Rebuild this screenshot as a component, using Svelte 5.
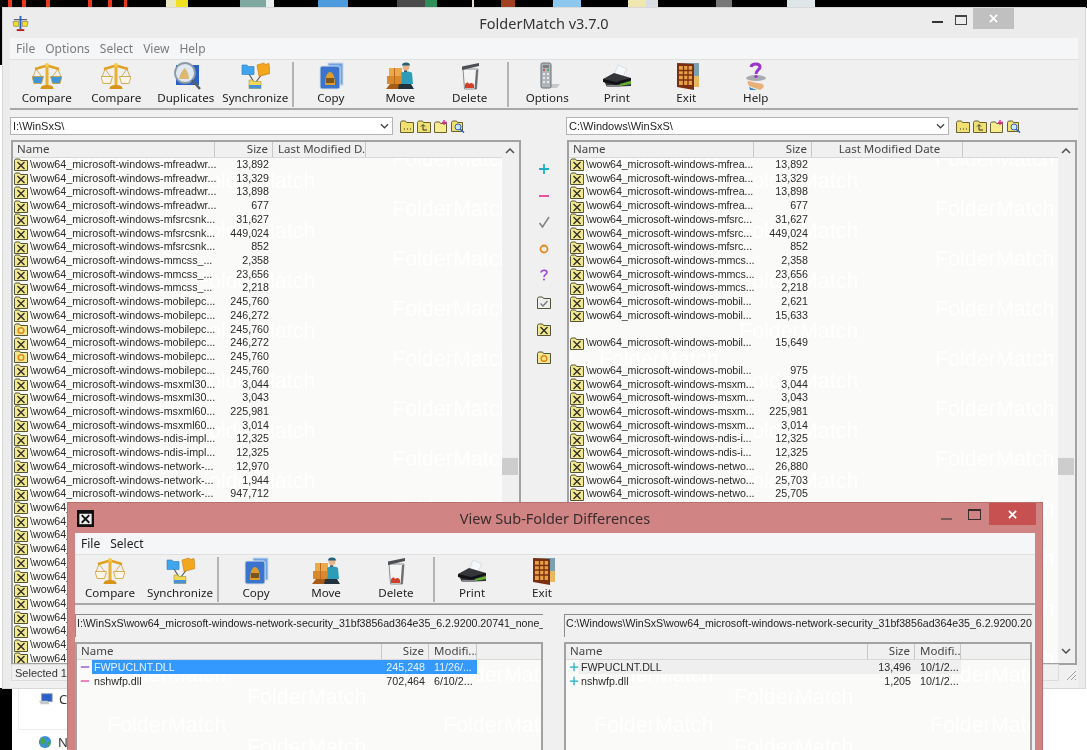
<script lang="ts">
  const leftRows = [
    ['mfreadwr...', '13,892', 'x'], ['mfreadwr...', '13,329', 'x'], ['mfreadwr...', '13,898', 'x'], ['mfreadwr...', '677', 'x'],
    ['mfsrcsnk...', '31,627', 'x'], ['mfsrcsnk...', '449,024', 'x'], ['mfsrcsnk...', '852', 'x'],
    ['mmcss_...', '2,358', 'x'], ['mmcss_...', '23,656', 'x'], ['mmcss_...', '2,218', 'x'],
    ['mobilepc...', '245,760', 'x'], ['mobilepc...', '246,272', 'x'], ['mobilepc...', '245,760', 'o'],
    ['mobilepc...', '246,272', 'x'], ['mobilepc...', '245,760', 'o'], ['mobilepc...', '245,760', 'x'],
    ['msxml30...', '3,044', 'x'], ['msxml30...', '3,043', 'x'], ['msxml60...', '225,981', 'x'], ['msxml60...', '3,014', 'x'],
    ['ndis-impl...', '12,325', 'x'], ['ndis-impl...', '12,325', 'x'],
    ['network-...', '12,970', 'x'], ['network-...', '1,944', 'x'], ['network-...', '947,712', 'x']
  ]
  const rightRows = [
    ['mfrea...', '13,892'], ['mfrea...', '13,329'], ['mfrea...', '13,898'], ['mfrea...', '677'],
    ['mfsrc...', '31,627'], ['mfsrc...', '449,024'], ['mfsrc...', '852'],
    ['mmcs...', '2,358'], ['mmcs...', '23,656'], ['mmcs...', '2,218'],
    ['mobil...', '2,621'], ['mobil...', '15,633'], null, ['mobil...', '15,649'], null, ['mobil...', '975'],
    ['msxm...', '3,044'], ['msxm...', '3,043'], ['msxm...', '225,981'], ['msxm...', '3,014'],
    ['ndis-i...', '12,325'], ['ndis-i...', '12,325'],
    ['netwo...', '26,880'], ['netwo...', '25,703'], ['netwo...', '25,705']
  ]
  const prefix = '\\wow64_microsoft-windows-'
  const hidden = Array.from({ length: 12 }, (_, i) => i)

  const menu = ['File', 'Options', 'Select', 'View', 'Help']
  const tiles = [0, 1, 2, 3, 4, 5, 6, 7, 8, 9, 10]

  // desktop icons peeking out above the main window
  const strip = [
    { x: 8, w: 4, c: '#e8381c' }, { x: 22, w: 4, c: '#e8381c' }, { x: 46, w: 4, c: '#e8381c' },
    { x: 88, w: 4, c: '#e8381c' }, { x: 108, w: 4, c: '#e8381c' }, { x: 124, w: 3, c: '#e8381c' },
    { x: 166, w: 12, c: '#e9e8c0' }, { x: 176, w: 12, c: '#f0e020' }, { x: 240, w: 26, c: '#7fa9a0' },
    { x: 266, w: 8, c: '#e8f0ee' }, { x: 318, w: 30, c: '#4d9bdc' }, { x: 397, w: 32, c: '#4a4a4a' },
    { x: 425, w: 12, c: '#2f8f5a' }, { x: 472, w: 2, c: '#e8e0d0' }, { x: 501, w: 14, c: '#a04020' },
    { x: 553, w: 28, c: '#8cc8ee' }, { x: 628, w: 18, c: '#efe6b0' }, { x: 646, w: 12, c: '#d8dde2' },
    { x: 716, w: 16, c: '#777' }, { x: 787, w: 28, c: '#dfe6ea' }
  ]
</script>

{#snippet folder(kind: string)}
  <svg class="folder" viewBox="0 0 14 13" aria-hidden="true">
    <path d="M.5 2.500 1.500 1h4l1 1.500h7v10H.5z" fill={kind === 'c' ? '#eeeeee' : '#f2e88e'} stroke="#55523a" />
    {#if kind === 'x'}
      <path d="M3.500 4 10.500 11M10.500 4 3.500 11" stroke="#2a2a2a" stroke-width="1.300" />
    {:else if kind === 'o'}
      <circle cx="7" cy="7.500" r="2.800" fill="none" stroke="#e08a20" stroke-width="1.600" />
    {:else if kind === 'c'}
      <path d="M3.500 7.500 6 10l4.500-5" fill="none" stroke="#777" stroke-width="1.300" />
    {/if}
  </svg>
{/snippet}

{#snippet scale(pan: string)}
  <svg class="tool" viewBox="0 0 30 28" aria-hidden="true">
    <path d="M3 7 15 3.500 27 7" fill="none" stroke="#e0a020" stroke-width="2.400" />
    <rect x="13.500" y="2" width="3" height="21" fill="#eab030" />
    <circle cx="15" cy="3" r="2" fill="#f6cc50" />
    <path d="M8.500 27c0-3.500 3.500-4 6.500-4s6.500.5 6.500 4z" fill="#d8941a" />
    <path d="M4 7 1 15M4 7 10 15M26 7 20 15M26 7 29 15" stroke="#d09a30" stroke-width=".8" />
    <path d="M0 14.500h11.500l-2 7h-7.500z" fill={pan} stroke="#d09a30" stroke-width=".8" />
    <path d="M18.500 14.500h11.500l-2 7h-7.500z" fill={pan} stroke="#d09a30" stroke-width=".8" />
  </svg>
{/snippet}

{#snippet dupes()}
  <svg class="tool" viewBox="0 0 30 28" aria-hidden="true">
    <rect x="5" y="3" width="23" height="20" fill="#2a62c4" />
    <circle cx="14" cy="11" r="10" fill="#dfe8f2" stroke="#8a99a8" stroke-width="1.800" />
    <path d="M8 17c1-6 3-8 6-11 2 3 4 6 4 11z" fill="#dcb870" />
    <path d="M21 18 29 27" stroke="#55606a" stroke-width="2.500" />
  </svg>
{/snippet}

{#snippet sync()}
  <svg class="tool" viewBox="0 0 30 28" aria-hidden="true">
    <path d="M9 12 14 20M22 12 16 20" stroke="#5a5a5a" stroke-width="1.200" />
    <path d="M2 3h5l1 1.500h6v8H2z" fill="#3fa6ee" stroke="#2b78b8" stroke-width=".6" />
    <path d="M17 3l7-2 1 1.500 4-1 1 10-11 3z" fill="#f2a71e" stroke="#c07a10" stroke-width=".6" />
    <path d="M9 18h4l1 1.500h7v7H9z" fill="#f0d858" stroke="#a8963a" stroke-width=".6" />
    <path d="M9 23h12v3.500H9z" fill="#4a90d8" />
  </svg>
{/snippet}

{#snippet copy()}
  <svg class="tool" viewBox="0 0 30 28" aria-hidden="true">
    <rect x="12" y="1" width="15" height="22" fill="#6ea4e4" stroke="#ccd8e6" />
    <rect x="4" y="4" width="20" height="23" rx="2" fill="#3a74cc" stroke="#d8e0ea" />
    <path d="M9 23c0-8 2-13 5-13s5 5 5 13z" fill="#dd9c2c" />
    <rect x="10" y="16" width="8" height="5" fill="#7a5520" />
  </svg>
{/snippet}

{#snippet move()}
  <svg class="tool" viewBox="0 0 30 28" aria-hidden="true">
    <rect x="4" y="6" width="13" height="9" fill="#eba94c" />
    <rect x="2" y="14" width="15" height="8" fill="#d9882c" />
    <path d="M9.500 6v16" stroke="#b96a1e" />
    <path d="M1 27l4-5h10v5z" fill="#a85c18" />
    <circle cx="21" cy="5" r="3.400" fill="#e8b48a" />
    <path d="M17 3.500a4 3 0 0 1 8 0z" fill="#26607a" />
    <path d="M19 8.500h3v3h-3z" fill="#3a2a20" />
    <path d="M16 11c2-2 9-2 11 0l1 11h-7l-2 3h-4l2-7z" fill="#2c9cb8" />
    <path d="M14 22h12l3 5H13z" fill="#24323c" />
  </svg>
{/snippet}

{#snippet trash()}
  <svg class="tool" viewBox="0 0 30 28" aria-hidden="true">
    <path d="M8 7h15l-1.500 20h-12z" fill="#f4f4f4" stroke="#8a8d90" />
    <path d="M7 4.500 24 1v3L7 8z" fill="#4c4f53" />
    <path d="M21 8h2l-1.500 19h-2z" fill="#6a6d70" />
    <path d="M10 23c1-3 3-3 4-1 2-2 4-1 5 1v3H10z" fill="#d2402a" />
  </svg>
{/snippet}

{#snippet options()}
  <svg class="tool" viewBox="0 0 30 28" aria-hidden="true">
    <path d="M18 22h10l-3 4H16z" fill="#c8c8c8" />
    <rect x="9" y="1" width="10" height="25" rx="1.500" fill="#b0b5ba" stroke="#6a7076" />
    <rect x="11" y="3" width="6" height="3" fill="#7a7e82" />
    <circle cx="12" cy="8" r="1" fill="#d04040" /><circle cx="16" cy="8" r="1" fill="#40a050" />
    <path d="M11 11h2v2h-2zM15 11h2v2h-2zM11 15h2v2h-2zM15 15h2v2h-2zM11 19h2v2h-2zM15 19h2v2h-2z" fill="#e8eaec" />
  </svg>
{/snippet}

{#snippet printer()}
  <svg class="tool" viewBox="0 0 30 28" aria-hidden="true">
    <path d="M12 13 16 3l9 4-5 9z" fill="#f4f8fb" stroke="#c4ccd2" stroke-width=".6" />
    <path d="M1 17 12 11l17 5v8l-24 1z" fill="#34363a" />
    <path d="M1 17 14 20l15-4v2L14 23 1 20z" fill="#111216" />
    <path d="M18 24l11-2v-3l-11 3z" fill="#62b030" />
    <rect x="5" y="23" width="13" height="2" fill="#86888c" />
  </svg>
{/snippet}

{#snippet door()}
  <svg class="tool" viewBox="0 0 30 28" aria-hidden="true">
    <path d="M7 1h21v24H23z" fill="#7ba0b0" />
    <path d="M22 14h6v11h-6z" fill="#e8b860" />
    <path d="M6 1 23 2v26L6 25z" fill="#7a3010" />
    <rect x="8" y="4" width="13" height="19" fill="#e8a040" />
    <path d="M8 8.500h13M8 13h13M8 18h13M12.500 4v19M17 4v19" stroke="#7a3010" stroke-width="1.300" />
  </svg>
{/snippet}

{#snippet help()}
  <svg class="tool" viewBox="0 0 30 28" aria-hidden="true">
    <ellipse cx="15" cy="16" rx="10" ry="3" fill="#a8acb0" />
    <path d="M8 24c-2-4-2-5 0-5l8 2c5 .5 8 1 6 5l-3 2z" fill="#eab07a" />
    <path d="M10 5c1-4 9-4 9 0 0 3-4 3-4 7" fill="none" stroke="#9a35cc" stroke-width="3" />
    <circle cx="15" cy="14.500" r="1.600" fill="#9a35cc" />
    <path d="M8 25 16 28H9z" fill="#3b8ad0" />
  </svg>
{/snippet}

{#snippet tool(label: string, icon: any, arg?: string)}
  <div class="tool-btn">
    {@render icon(arg)}
    <span>{label}</span>
  </div>
{/snippet}

{#snippet pathIcons()}
  <div class="path-icons">
    <svg viewBox="0 0 14 13" aria-hidden="true"><path d="M.5 2.500 1.500 1h4l1 1.500h7v10H.5z" fill="#f0e070" stroke="#6b6030" /><path d="M4 9h1M7 9h1M10 9h1" stroke="#333" /></svg>
    <svg viewBox="0 0 14 13" aria-hidden="true"><path d="M.5 2.500 1.500 1h4l1 1.500h7v10H.5z" fill="#f0e070" stroke="#6b6030" /><path d="M6 10V5M4 6.500 6 4.500 8 6.500M6 10h4" fill="none" stroke="#333" /></svg>
    <svg viewBox="0 0 14 13" aria-hidden="true"><path d="M.5 3.500 1.500 2h4l1 1.500h6v9H.5z" fill="#f8ec90" stroke="#6b6030" /><path d="M10 0v5M8 2.500h5" stroke="#e03090" stroke-width="1.400" /></svg>
    <svg viewBox="0 0 14 13" aria-hidden="true"><path d="M.5 2.500 1.500 1h4l1 1.500h5v9H.5z" fill="#f0e070" stroke="#6b6030" /><circle cx="7" cy="7" r="3" fill="#cfe6f8" stroke="#2a62c4" /><path d="M9 9 13 12.500" stroke="#2a62c4" stroke-width="1.600" /></svg>
  </div>
{/snippet}

{#snippet marks(dx: number, dy: number)}
  <div class="marks" aria-hidden="true">
    {#each tiles as t}
      <span style="left:{dx}px;top:{dy + t * 50}px">FolderMatch</span>
      <span style="left:{dx + 140}px;top:{dy + 22 + t * 50}px">FolderMatch</span>
      <span style="left:{dx + 336}px;top:{dy + t * 50}px">FolderMatch</span>
      <span style="left:{dx + 476}px;top:{dy + 22 + t * 50}px">FolderMatch</span>
    {/each}
  </div>
{/snippet}

{#snippet scrollbar()}
  <div class="scroll">
    <svg class="chev up" viewBox="0 0 10 6" aria-hidden="true"><path d="M1 5 5 1l4 4" /></svg>
    <div class="thumb"></div>
    <svg class="chev down" viewBox="0 0 10 6" aria-hidden="true"><path d="M1 1l4 4 4-4" /></svg>
  </div>
{/snippet}

{#snippet winButtons()}
  <div class="min"></div>
  <div class="max"></div>
  <div class="close">
    <svg viewBox="0 0 10 10" aria-hidden="true"><path d="M1 1l8 8M9 1 1 9" /></svg>
  </div>
{/snippet}

<div class="desktop">
  <div class="top-strip">
    {#each strip as s}
      <i style="left:{s.x}px;width:{s.w}px;background:{s.c}"></i>
    {/each}
  </div>
  <div class="black-edge"></div>

  <div class="behind">
    <div class="behind-row line">
      <svg viewBox="0 0 16 14" aria-hidden="true"><rect x="3" y="1" width="12" height="9" fill="#2a62c4" stroke="#99a" /><path d="M0 9h10l2 4H2z" fill="#c4c8cc" /></svg>
      <span>Co</span>
    </div>
    <div class="behind-row">
      <svg viewBox="0 0 16 16" aria-hidden="true"><circle cx="8" cy="8" r="7" fill="#3d8fd8" /><path d="M3 4c3-2 5 0 5 3s-3 5-5 3zM10 9l4-2c0 4-2 6-4 6z" fill="#46a83c" /></svg>
      <span>N</span>
    </div>
  </div>

  <section class="win main">
    <header class="title">
      <svg class="app-icon" viewBox="0 0 18 18" aria-hidden="true">
        <path d="M2 5h14" stroke="#333" stroke-width="1" />
        <rect x="8" y="1" width="2" height="14" fill="#2a62c4" />
        <path d="M1 7h6v5H2zM11 7h6l-1 5h-5z" fill="#f6e020" stroke="#555" stroke-width=".5" />
        <rect x="5" y="15" width="8" height="2" fill="#b02020" />
      </svg>
      <h1>FolderMatch v3.7.0</h1>
      {@render winButtons()}
    </header>

    <div class="client">
      <nav class="menu faded">
        {#each menu as m}<span>{m}</span>{/each}
      </nav>

      <div class="toolbar">
        {@render tool('Compare', scale, '#3f96d8')}
        {@render tool('Compare', scale, '#fbf6e8')}
        {@render tool('Duplicates', dupes)}
        {@render tool('Synchronize', sync)}
        <div class="sep"></div>
        {@render tool('Copy', copy)}
        {@render tool('Move', move)}
        {@render tool('Delete', trash)}
        <div class="sep wide"></div>
        {@render tool('Options', options)}
        {@render tool('Print', printer)}
        {@render tool('Exit', door)}
        {@render tool('Help', help)}
      </div>

      <div class="panes">
        <div class="pane">
          <div class="path-row">
            <div class="combo">
              <span>I:\WinSxS\</span>
              <svg viewBox="0 0 10 6" aria-hidden="true"><path d="M1 1l4 4 4-4" /></svg>
            </div>
            {@render pathIcons()}
          </div>
          <div class="list big">
            {@render marks(43, -10)}
            <div class="head left-head">
              <span class="name">Name</span><span class="size">Size</span><span class="date">Last Modified D...</span>
            </div>
            <div class="rows">
              {#each leftRows as r}
                <div class="row left-head">
                  <span class="name">{@render folder(r[2])}{prefix}{r[0]}</span><span class="size">{r[1]}</span>
                </div>
              {/each}
              {#each hidden as h}
                <div class="row left-head"><span class="name">{@render folder('x')}{prefix}network</span></div>
              {/each}
            </div>
            {@render scrollbar()}
          </div>
        </div>

        <div class="legend">
          <svg viewBox="0 0 12 12" aria-hidden="true"><path d="M6 1v10M1 6h10" stroke="#1fb0c8" stroke-width="1.800" /></svg>
          <svg viewBox="0 0 12 12" aria-hidden="true"><path d="M1 6h10" stroke="#e8409a" stroke-width="1.800" /></svg>
          <svg viewBox="0 0 12 12" aria-hidden="true"><path d="M1.500 7 4.500 11 11 1" fill="none" stroke="#808080" stroke-width="1.500" /></svg>
          <svg viewBox="0 0 12 12" aria-hidden="true"><circle cx="6" cy="6" r="3.500" fill="none" stroke="#e88a20" stroke-width="1.800" /></svg>
          <svg viewBox="0 0 12 12" aria-hidden="true"><path d="M3 3.500C3.500 .5 9 .5 9 3.500 9 5.500 6 5.500 6 8" fill="none" stroke="#a040e8" stroke-width="1.500" /><circle cx="6" cy="10.500" r="1" fill="#a040e8" /></svg>
          {@render folder('c')}
          {@render folder('x')}
          {@render folder('o')}
        </div>

        <div class="pane">
          <div class="path-row">
            <div class="combo">
              <span>C:\Windows\WinSxS\</span>
              <svg viewBox="0 0 10 6" aria-hidden="true"><path d="M1 1l4 4 4-4" /></svg>
            </div>
            {@render pathIcons()}
          </div>
          <div class="list big">
            {@render marks(30, -10)}
            <div class="head right-head">
              <span class="name">Name</span><span class="size">Size</span><span class="date center">Last Modified Date</span>
            </div>
            <div class="rows">
              {#each rightRows as r}
                <div class="row right-head">
                  {#if r}
                    <span class="name">{@render folder('x')}{prefix}{r[0]}</span><span class="size">{r[1]}</span>
                  {/if}
                </div>
              {/each}
            </div>
            {@render scrollbar()}
          </div>
        </div>
      </div>

      <footer class="status">
        <div class="cell">Selected 1</div>
        <svg class="grip" viewBox="0 0 12 12" aria-hidden="true"><path d="M11 2 2 11M11 6 6 11M11 10l-1 1" /></svg>
      </footer>
    </div>
  </section>

  <section class="win sub">
    <header class="title">
      <svg class="app-icon" viewBox="0 0 18 18" aria-hidden="true">
        <rect width="18" height="18" fill="#111" />
        <path d="M2.500 4h13v11h-13z" fill="#eee" />
        <path d="M5 5.500 13 13.500M13 5.500 5 13.500" stroke="#111" stroke-width="2" />
      </svg>
      <h1>View Sub-Folder Differences</h1>
      {@render winButtons()}
    </header>

    <div class="client">
      <nav class="menu">
        <span>File</span><span>Select</span>
      </nav>

      <div class="toolbar">
        {@render tool('Compare', scale, '#fbf6e8')}
        {@render tool('Synchronize', sync)}
        <div class="sep"></div>
        {@render tool('Copy', copy)}
        {@render tool('Move', move)}
        {@render tool('Delete', trash)}
        <div class="sep"></div>
        {@render tool('Print', printer)}
        {@render tool('Exit', door)}
      </div>

      <div class="sub-panes">
        <div class="sub-pane">
          <div class="field">I:\WinSxS\wow64_microsoft-windows-network-security_31bf3856ad364e35_6.2.9200.20741_none_</div>
          <div class="list">
            {@render marks(30, 4)}
            <div class="head sub-left">
              <span class="name">Name</span><span class="size">Size</span><span class="date">Modifi...</span>
            </div>
            <div class="file sub-left selected">
              <span class="name"><svg class="mark" viewBox="0 0 12 12" aria-hidden="true"><path d="M1 6h10" stroke="#8a40d0" stroke-width="1.500" /></svg><b>FWPUCLNT.DLL</b></span><span class="size">245,248</span><span class="date">11/26/...</span>
            </div>
            <div class="file sub-left">
              <span class="name"><svg class="mark" viewBox="0 0 12 12" aria-hidden="true"><path d="M1 6h10" stroke="#e8409a" stroke-width="1.500" /></svg><b>nshwfp.dll</b></span><span class="size">702,464</span><span class="date">6/10/2...</span>
            </div>
          </div>
        </div>
        <div class="sub-pane">
          <div class="field">C:\Windows\WinSxS\wow64_microsoft-windows-network-security_31bf3856ad364e35_6.2.9200.20</div>
          <div class="list">
            {@render marks(28, 4)}
            <div class="head sub-right">
              <span class="name">Name</span><span class="size">Size</span><span class="date">Modifi...</span>
            </div>
            <div class="file sub-right shaded">
              <span class="name"><svg class="mark" viewBox="0 0 12 12" aria-hidden="true"><path d="M6 1v10M1 6h10" stroke="#1fb0c8" stroke-width="1.500" /></svg><b>FWPUCLNT.DLL</b></span><span class="size">13,496</span><span class="date">10/1/2...</span>
            </div>
            <div class="file sub-right">
              <span class="name"><svg class="mark" viewBox="0 0 12 12" aria-hidden="true"><path d="M6 1v10M1 6h10" stroke="#1fb0c8" stroke-width="1.500" /></svg><b>nshwfp.dll</b></span><span class="size">1,205</span><span class="date">10/1/2...</span>
            </div>
          </div>
        </div>
      </div>
    </div>
  </section>
</div>

<style>
  :global(body) {
    margin: 0;
    background: #fff;
  }

  .desktop {
    position: relative;
    width: 1087px;
    height: 750px;
    overflow: hidden;
    background: #fff;
    font-family: "Noto Sans", sans-serif;
    color: #222;
    filter: blur(0.35px);
  }

  /* what shows of the desktop behind the windows */
  .top-strip {
    position: absolute;
    inset: 0 0 auto 0;
    height: 8px;
    background: #000;
  }
  .top-strip i {
    position: absolute;
    top: 0;
    bottom: 0;
  }
  .black-edge {
    position: absolute;
    left: 0;
    top: 0;
    width: 4px;
    height: 65px;
    background: #000;
  }
  .behind {
    position: absolute;
    left: 0;
    top: 688px;
    width: 80px;
    height: 62px;
    box-sizing: border-box;
    padding-left: 6px;
    background: #fff;
    border-left: 12px solid #000;
  }
  .behind-row {
    display: flex;
    align-items: center;
    gap: 6px;
    height: 22px;
    padding-left: 20px;
    font-size: 13px;
    color: #333;
  }
  .behind-row.line {
    padding-bottom: 19px;
    margin-bottom: 1px;
    height: 22px;
    border-bottom: 1px solid #eeeeee;
    border-left: 1px solid #eeeeee;
  }
  .behind-row svg {
    width: 14px;
    height: 14px;
  }

  /* windows */
  .win {
    position: absolute;
    display: flex;
    flex-direction: column;
    box-sizing: border-box;
  }
  .main {
    left: 3px;
    top: 8px;
    width: 1082px;
    height: 680px;
    padding: 0 7px;
    background: #ececec;
    box-shadow: 0 0 0 1px #d8d8d8;
  }
  .sub {
    left: 68px;
    top: 503px;
    width: 974px;
    height: 260px;
    padding: 0 7px;
    background: #d08484;
    box-shadow: 0 0 0 1px #bb7070;
  }

  .title {
    position: relative;
    flex: none;
    height: 30px;
    display: flex;
    align-items: center;
    justify-content: center;
  }
  .title h1 {
    margin: 0;
    font-size: 14.5px;
    font-weight: 400;
    color: #333;
  }
  .sub .title h1 {
    color: #3a2c2c;
  }
  .app-icon {
    position: absolute;
    left: 2px;
    top: 7px;
    width: 17px;
    height: 17px;
  }
  .min {
    position: absolute;
    right: 135px;
    top: 13px;
    width: 11px;
    height: 2px;
    background: #333;
  }
  .max {
    position: absolute;
    right: 111px;
    top: 7px;
    width: 10px;
    height: 7px;
    border: 1px solid #444;
    border-top-width: 2px;
  }
  .close {
    position: absolute;
    right: 64px;
    top: 0;
    width: 41px;
    height: 21px;
    display: flex;
    align-items: center;
    justify-content: center;
    background: #c0c0c0;
  }
  .close svg {
    width: 9px;
    height: 9px;
    stroke: #fff;
    stroke-width: 2;
  }
  .sub .min {
    right: 83px;
    top: 15px;
    background: #7a5a5a;
  }
  .sub .max {
    right: 54px;
    top: 6px;
    width: 11px;
    height: 8px;
    border-color: #3a2c2c;
  }
  .sub .close {
    right: -1px;
    width: 47px;
    height: 22px;
    background: #c75050;
  }

  .client {
    flex: 1;
    min-height: 0;
    display: flex;
    flex-direction: column;
    background: #f0f0f0;
  }

  .menu {
    flex: none;
    height: 21px;
    display: flex;
    align-items: center;
    gap: 10px;
    padding-left: 6px;
    background: #f5f6f8;
    font-size: 12px;
  }
  .menu.faded {
    color: #7b7b7b;
  }

  .toolbar {
    flex: none;
    height: 48px;
    display: flex;
    padding-left: 2px;
    background: #f0f0f0;
    border-top: 1px solid #e0e0e0;
    border-bottom: 2px solid #a8a8a8;
  }
  .sub .toolbar {
    padding-left: 0;
  }
  .tool-btn {
    width: 69.5px;
    display: flex;
    flex-direction: column;
    align-items: center;
    font-size: 11.6px;
    line-height: 16px;
  }
  .sub .tool-btn {
    width: 70px;
  }
  .tool {
    width: 30px;
    height: 28px;
    margin: 2px 0 0;
    flex: none;
  }
  .sep {
    width: 2px;
    margin: 2px 2px 1px;
    background: #b4b4b4;
  }
  .sep.wide {
    margin-right: 4px;
  }

  /* main window panes */
  .panes {
    flex: 1;
    min-height: 0;
    display: grid;
    grid-template-columns: 511px 45px 511px;
    padding-top: 7px;
  }
  .pane {
    min-width: 0;
    display: flex;
    flex-direction: column;
  }
  .path-row {
    flex: none;
    display: flex;
    align-items: center;
    gap: 7px;
    height: 18px;
  }
  .combo {
    width: 383px;
    height: 18px;
    box-sizing: border-box;
    display: flex;
    align-items: center;
    justify-content: space-between;
    padding: 0 3px 0 2px;
    background: #fff;
    border: 1px solid #b4b4b4;
    font: 11px "Liberation Sans", sans-serif;
  }
  .combo svg {
    width: 9px;
    height: 6px;
    fill: none;
    stroke: #444;
    stroke-width: 1.400;
  }
  .path-icons {
    display: flex;
    gap: 3px;
  }
  .path-icons svg {
    width: 14px;
    height: 13px;
  }

  .list {
    position: relative;
    flex: 1;
    min-height: 0;
    overflow: hidden;
    box-sizing: border-box;
    background: #fafaf8;
    border: 2px solid #a2a2a2;
    border-bottom: none;
    font: 10.7px "Liberation Sans", sans-serif;
    color: #2a2a2a;
  }
  .list.big {
    flex: none;
    height: 525px;
    margin: 5px 0 0 1px;
    border-bottom: 2px solid #a2a2a2;
  }
  .marks {
    position: absolute;
    inset: 15px 0 0 0;
    overflow: hidden;
  }
  .marks span {
    position: absolute;
    font: 400 21.5px "Liberation Sans", sans-serif;
    color: #fff;
    white-space: nowrap;
  }

  .head,
  .row,
  .file {
    position: relative;
    display: grid;
  }
  .head {
    height: 15px;
    align-items: center;
    background: #f0f0f0;
    border-bottom: 1px solid #d8d8d8;
    font: 11.5px "Noto Sans", sans-serif;
    color: #444;
  }
  .head span {
    height: 100%;
    line-height: 14px;
    box-sizing: border-box;
    border-right: 1px solid #c8c8c8;
  }
  .head .name {
    padding-left: 4px;
  }
  .left-head {
    grid-template-columns: 202px 58px 93px;
  }
  .right-head {
    grid-template-columns: 185px 58px 151px;
  }
  .size {
    padding-right: 4px;
    text-align: right;
  }
  .date {
    padding-left: 5px;
    white-space: nowrap;
    overflow: hidden;
  }
  .center {
    text-align: center;
  }
  .rows {
    position: relative;
  }
  .row {
    height: 13.72px;
    line-height: 13.72px;
    white-space: nowrap;
  }
  .row .name {
    display: flex;
    align-items: center;
    padding-left: 1px;
    gap: 2px;
    min-width: 0;
  }
  .right-head.row .name {
    letter-spacing: -0.08px;
  }
  .folder {
    width: 14px;
    height: 13px;
    flex: none;
  }

  .scroll {
    position: absolute;
    right: 0;
    top: 0;
    bottom: 0;
    width: 17px;
    background: #f0f0f0;
  }
  .chev {
    position: absolute;
    left: 3px;
    width: 10px;
    height: 6px;
    fill: none;
    stroke: #505050;
    stroke-width: 1.500;
  }
  .chev.up {
    top: 6px;
  }
  .chev.down {
    bottom: 9px;
  }
  .thumb {
    position: absolute;
    left: 0;
    top: 316px;
    width: 16px;
    height: 17px;
    background: #cdcdcd;
  }

  .legend {
    display: flex;
    flex-direction: column;
    align-items: center;
    padding-top: 46px;
    gap: 14.500px;
  }
  .legend svg {
    width: 12px;
    height: 12px;
  }
  .legend .folder {
    width: 14px;
    height: 13px;
  }

  .status {
    flex: none;
    position: relative;
    height: 19px;
    margin-bottom: 5px;
    display: flex;
    font: 11px "Liberation Sans", sans-serif;
  }
  .cell {
    width: 1048px;
    margin: 0 0 2px 1px;
    padding-left: 3px;
    box-sizing: border-box;
    border: 1px solid #dcdcdc;
    line-height: 16px;
    color: #333;
  }
  .grip {
    position: absolute;
    right: 1px;
    top: 5px;
    width: 12px;
    height: 12px;
    fill: none;
    stroke: #a0a0a0;
  }

  /* sub window */
  .sub-panes {
    flex: 1;
    min-height: 0;
    display: grid;
    grid-template-columns: 468px 468px;
    column-gap: 21px;
    padding-top: 9px;
  }
  .sub-pane {
    min-width: 0;
    display: flex;
    flex-direction: column;
  }
  .field {
    flex: none;
    height: 23px;
    padding-left: 1px;
    overflow: hidden;
    white-space: nowrap;
    background: #f0f0f0;
    border-top: 1px solid #8c8c8c;
    border-left: 1px solid #8c8c8c;
    font: 10.6px/16px "Liberation Sans", sans-serif;
    box-sizing: border-box;
  }
  .sub-pane .list {
    margin-top: 5px;
  }
  .sub-left {
    grid-template-columns: 305px 47px 48px;
  }
  .sub-right {
    grid-template-columns: 302px 47px 46px;
  }
  .file {
    height: 14px;
    line-height: 14px;
    width: fit-content;
    margin-top: 0;
  }
  .file .name {
    display: flex;
    align-items: center;
    padding-left: 3px;
  }
  .file b {
    font-weight: 400;
    padding-left: 2px;
    flex: 1;
    height: 100%;
  }
  .sub-left .mark {
    margin-right: 2px;
  }
  .mark {
    width: 10px;
    height: 10px;
    flex: none;
  }
  .selected b,
  .selected .size,
  .selected .date {
    background: #3399ff;
    color: #e8f2ff;
  }
  .shaded b,
  .shaded .size,
  .shaded .date {
    background: #efefef;
  }
</style>
